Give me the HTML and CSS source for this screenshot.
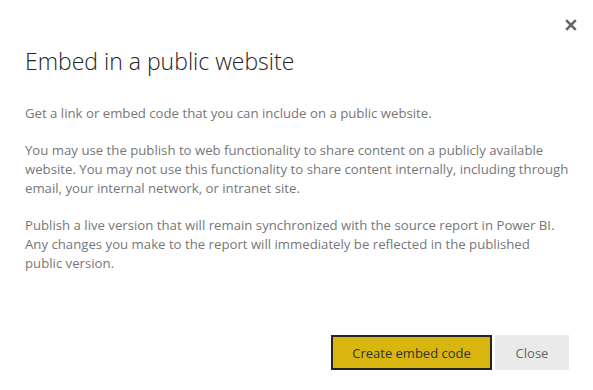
FILE: index.html
```html
<!DOCTYPE html>
<html lang="en">

<head>
    <meta charset="UTF-8">
    <meta name="viewport" content="width=device-width, initial-scale=1.0">
    <title>Embed in a public website</title>
    <link rel="stylesheet" href="styles.css">
</head>

<body>
    <div class="dialog">
        <div class="dialog-top">
            <button class="close-x" aria-label="Close">
                <svg width="12" height="12" viewBox="0 0 12 12">
                    <path d="M1.2 1.2 L10.8 10.8 M10.8 1.2 L1.2 10.8" stroke="#666" stroke-width="2.6" />
                </svg>
            </button>
        </div>
        <h1 class="title">Embed in a public website</h1>
        <div class="content">
            <p>Get a link or embed code that you can include on a public website.</p>
            <p>You may use the publish to web functionality to share content on a publicly available
                website. You may not use this functionality to share content internally, including through
                email, your internal network, or intranet site.</p>
            <p>Publish a live version that will remain synchronized with the source report in Power BI.
                Any changes you make to the report will immediately be reflected in the published
                <span class="nowrap">public version.</span></p>
        </div>
        <div class="actions">
            <button class="btn btn-primary">Create embed code</button>
            <button class="btn btn-secondary">Close</button>
        </div>
    </div>
</body>

</html>
```

FILE: styles.css
```css
* {
    margin: 0;
    padding: 0;
    box-sizing: border-box;
}

body {
    width: 593px;
    height: 390px;
    background: #fff;
    font-family: "Open Sans", "Liberation Sans", sans-serif;
    overflow: hidden;
}

.dialog {
    height: 390px;
    display: flex;
    flex-direction: column;
    padding: 0 20px 20px 25px;
}

/* close icon row */
.dialog-top {
    display: flex;
    justify-content: flex-end;
    padding-top: 19px;
    margin-right: -4px;
}

.close-x {
    border: none;
    background: none;
    width: 12px;
    height: 12px;
    display: block;
    cursor: pointer;
}

.close-x svg {
    display: block;
}

.title {
    font-weight: 300;
    font-size: 23px;
    line-height: 30px;
    color: #252423;
    margin-top: 15px;
}

.content {
    margin-top: 28px;
    color: #777;
    font-size: 13.2px;
    line-height: 19px;
}

.content p {
    margin-bottom: 18px;
}

.nowrap {
    white-space: nowrap;
}

/* buttons */
.actions {
    margin-top: auto;
    display: flex;
    justify-content: flex-end;
    gap: 3px;
    margin-right: 4px;
}

.btn {
    height: 35px;
    font-family: inherit;
    font-size: 13px;
    cursor: pointer;
}

.btn-primary {
    width: 161px;
    background: #d9b50f;
    border: 2px solid #252423;
    color: #333;
}

.btn-secondary {
    width: 74px;
    background: #eaeaea;
    border: none;
    color: #666;
}
```
